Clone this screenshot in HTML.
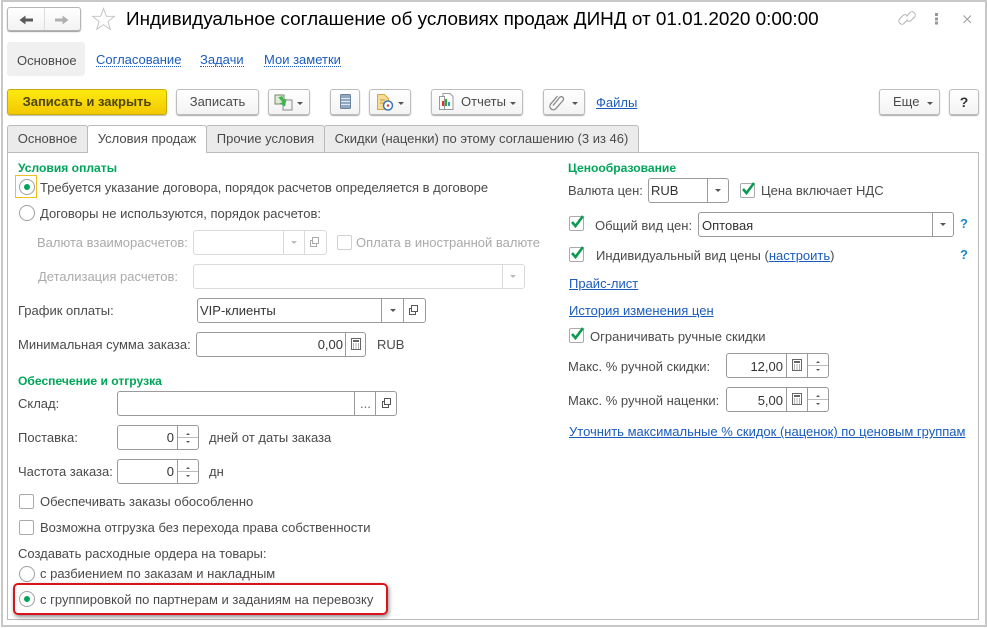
<!DOCTYPE html>
<html><head><meta charset="utf-8">
<style>
html,body{margin:0;padding:0;background:#fff}
#p{position:relative;width:987px;height:628px;overflow:hidden;background:#fff;font-family:"Liberation Sans",sans-serif;font-size:13px;color:#4a4a4a}
#p>*{position:absolute;box-sizing:border-box}
.t{white-space:nowrap;line-height:18px;height:16px}
.g{color:#aaa}
.h{font-weight:bold;color:#00a55a;font-size:12.100px;line-height:16px}
.l{color:#1a5cbe;text-decoration:underline}
.d{color:#1a5cbe;border-bottom:1px dotted #1a5cbe;line-height:16px;height:15px;white-space:nowrap}
.b{height:26px;border:1px solid #bdbdbd;border-radius:3px;background:linear-gradient(#fff,#f3f3f3);box-shadow:0 1px 1px #aaa;text-align:center;line-height:24px;white-space:nowrap}
.f{border:1px solid #9a9a9a;border-radius:3px;background:#fff}
.fd{border:1px solid #dadada;border-radius:3px;background:#fff}
.v{width:1px;background:#9a9a9a}
.vd{width:1px;background:#dadada}
.c{width:15px;height:15px;border:1px solid #aaa;border-radius:2px;background:#fff}
.r{width:16px;height:16px;border:1px solid #a0a0a0;border-radius:50%;background:#fff}
.dot{width:6px;height:6px;border-radius:50%;background:#00a55a}
.tab{height:27px;top:125px;border:1px solid #bbb;border-bottom:none;background:#ebebeb;border-radius:3px 3px 0 0;text-align:center;line-height:26px;white-space:nowrap}
.ar{width:0;height:0;border-left:3px solid transparent;border-right:3px solid transparent;border-top:3px solid #555}
svg{overflow:visible}
</style></head><body>
<div id="p">
<div style="left:1px;top:0;width:986px;height:627px;border:2px solid #c8c8c8"></div>

<!-- nav buttons -->
<div class="b" style="left:7px;top:7px;width:74px;height:24px;box-shadow:0 1px 1px #999;border-color:#b5b5b5"></div>
<div style="left:44px;top:8px;width:1px;height:22px;background:#ddd"></div>
<svg style="left:0;top:0" width="130" height="40"><path d="M19.500 20l6-4.500v3h7.500v3h-7.500v3z" fill="#5a5a5a"/><path d="M68.500 20l-6-4.500v3h-7.500v3h7.500v3z" fill="#b0b0b0"/><path d="M103.500 8.500L106.300 16.200 114.400 16.400 108 21.500 110.300 29.300 103.500 24.700 96.700 29.300 99 21.500 92.600 16.400 100.700 16.200z" fill="#fff" stroke="#c6c6c6"/></svg>

<div class="t" style="left:126px;top:8px;height:24px;line-height:24px;font-size:18.900px;color:#000">Индивидуальное соглашение об условиях продаж ДИНД от 01.01.2020 0:00:00</div>

<svg style="left:895px;top:8px" width="85" height="24"><g fill="none" stroke="#b4b4b4" stroke-width="1"><path d="M11.500 8.500l3.500-4a3.200 3.200 0 0 1 4.500 4.500l-3.500 3.500a3 3 0 0 1-4.200 0"/><path d="M12.500 11.500l-3.500 4a3.200 3.200 0 0 1-4.500-4.500l3.500-3.500a3 3 0 0 1 4.200 0"/></g><g fill="#999"><rect x="40" y="5" width="3" height="3"/><rect x="40" y="9.500" width="3" height="3"/><rect x="40" y="13.500" width="3" height="3"/></g><path d="M68.500 7.500l7.500 7.500m0-7.500l-7.500 7.500" stroke="#999" stroke-width=".9" fill="none"/></svg>

<!-- form nav -->
<div style="left:7px;top:42px;width:78px;height:34px;background:#f0f0f0;border-radius:3px"></div>
<div class="t" style="left:17px;top:52px">Основное</div>
<div class="d" style="left:96px;top:52px">Согласование</div>
<div class="d" style="left:200px;top:52px">Задачи</div>
<div class="d" style="left:264px;top:52px">Мои заметки</div>

<!-- command bar -->
<div class="b" style="left:7px;top:89px;width:160px;background:linear-gradient(#fdea10,#f2c800);border-color:#c7aa10;font-weight:bold;color:#4d4410;box-shadow:0 1px 1px #bba">Записать и закрыть</div>
<div class="b" style="left:176px;top:89px;width:83px">Записать</div>
<div class="b" style="left:268px;top:89px;width:42px"></div>
<svg style="left:274px;top:93px" width="20" height="18"><rect x="1" y="2" width="9" height="9" fill="#dfe9d8" stroke="#7a8a70"/><rect x="9" y="7" width="9" height="10" fill="#f4f4f4" stroke="#8a8a8a"/><path d="M6 3h4v4l3 0-4 7-4-5h3z" fill="#3fb54a" transform="rotate(-20 9 8)"/></svg>
<div class="ar" style="left:297px;top:102px"></div>
<div class="b" style="left:330px;top:89px;width:30px"></div>
<svg style="left:340px;top:94px" width="12" height="16"><rect x="0.500" y="0.500" width="10" height="14" rx="1" fill="#8fa9c3" stroke="#6d8299"/><path d="M1 4.500h9M1 7.500h9M1 10.500h9" stroke="#dfe7ef"/></svg>
<div class="b" style="left:369px;top:89px;width:42px"></div>
<svg style="left:377px;top:94px" width="18" height="18"><path d="M.5 .5h7l4 4v11h-11z" fill="#f6dc94" stroke="#d2a848"/><path d="M3 6h5M3 9h4" stroke="#c69a3a"/><circle cx="11" cy="11.500" r="4.500" fill="#fff" stroke="#3a78b8" stroke-width="1.500"/><circle cx="11" cy="11.500" r="1.300" fill="#d8404a"/></svg>
<div class="ar" style="left:398px;top:102px"></div>
<div class="b" style="left:431px;top:89px;width:92px;text-align:left;padding-left:29px">Отчеты</div>
<svg style="left:437px;top:92px" width="20" height="20"><path d="M6 1.500h7l3 3v13h-10z" fill="#fff" stroke="#999"/><path d="M2.500 4.500h5v13h-5z" fill="#fff" stroke="#999"/><rect x="5" y="9" width="2" height="5" fill="#d33"/><rect x="8" y="7" width="2" height="7" fill="#3a3"/><rect x="11" y="10" width="2" height="4" fill="#39c"/></svg>
<div class="ar" style="left:510px;top:102px"></div>
<div class="b" style="left:543px;top:89px;width:42px"></div>
<svg style="left:550px;top:93px" width="16" height="18"><path d="M4 12.500l6.500-8a2.300 2.300 0 0 1 3.500 3l-7.500 8.500a3.500 3.500 0 0 1-5-4.800l7-8.200" fill="none" stroke="#8a8a8a" stroke-width="1.300" transform="translate(-1 0)"/></svg>
<div class="ar" style="left:572px;top:102px"></div>
<div class="t l" style="left:596px;top:94px">Файлы</div>
<div class="b" style="left:879px;top:89px;width:61px;text-align:left;padding-left:13px">Еще</div>
<div class="ar" style="left:927px;top:102px"></div>
<div class="b" style="left:949px;top:89px;width:30px;font-weight:bold;font-size:14px;color:#333">?</div>

<!-- tabs + panel -->
<div style="left:7px;top:152px;width:972px;height:468px;border:1px solid #bbb"></div>
<div class="tab" style="left:7px;width:81px">Основное</div>
<div class="tab" style="left:87px;width:120px;height:28px;background:#fff;z-index:2">Условия продаж</div>
<div class="tab" style="left:206px;width:119px">Прочие условия</div>
<div class="tab" style="left:324px;width:315px">Скидки (наценки) по этому соглашению (3 из 46)</div>

<!-- left col -->
<div class="t h" style="left:18px;top:160px">Условия оплаты</div>
<div style="left:15px;top:175px;width:22px;height:23px;border:1px solid #f0c020"></div>
<div class="r" style="left:19px;top:179px"></div><div class="dot" style="left:24px;top:184px"></div>
<div class="t" style="left:40px;top:179px">Требуется указание договора, порядок расчетов определяется в договоре</div>
<div class="r" style="left:19px;top:205px"></div>
<div class="t" style="left:40px;top:205px">Договоры не используются, порядок расчетов:</div>

<div class="t g" style="left:37px;top:234px">Валюта взаиморасчетов:</div>
<div class="fd" style="left:193px;top:230px;width:134px;height:25px"></div>
<div class="vd" style="left:283px;top:231px;height:23px"></div><div class="vd" style="left:304px;top:231px;height:23px"></div>
<div class="ar" style="left:291px;top:241px;border-top-color:#bbb"></div>
<svg style="left:309px;top:236px" width="12" height="12"><path d="M3.500 1.500h6v6h-6zM3.500 4.500h-2v6h6v-3" fill="none" stroke="#aaa"/></svg>
<div class="c" style="left:337px;top:235px;border-color:#d0d0d0"></div>
<div class="t g" style="left:356px;top:234px">Оплата в иностранной валюте</div>

<div class="t g" style="left:38px;top:268px">Детализация расчетов:</div>
<div class="fd" style="left:193px;top:264px;width:332px;height:25px"></div>
<div class="vd" style="left:502px;top:265px;height:23px"></div>
<div class="ar" style="left:510px;top:275px;border-top-color:#bbb"></div>

<div class="t" style="left:18px;top:302px">График оплаты:</div>
<div class="f" style="left:197px;top:298px;width:229px;height:25px"></div>
<div class="v" style="left:381px;top:299px;height:23px"></div><div class="v" style="left:403px;top:299px;height:23px"></div>
<div class="ar" style="left:390px;top:309px"></div>
<svg style="left:408px;top:304px" width="12" height="12"><path d="M3.500 1.500h6v6h-6zM3.500 4.500h-2v6h6v-3" fill="none" stroke="#555"/></svg>
<div class="t" style="left:200px;top:302px;color:#333">VIP-клиенты</div>

<div class="t" style="left:18px;top:336px">Минимальная сумма заказа:</div>
<div class="f" style="left:196px;top:332px;width:170px;height:25px"></div>
<div class="v" style="left:345px;top:333px;height:23px"></div>
<div class="t" style="left:296px;top:336px;width:47px;text-align:right;color:#333">0,00</div>
<svg class="calc" style="left:350px;top:338px" width="12" height="13"><rect x="1.500" y="0.500" width="9" height="11" fill="none" stroke="#666"/><rect x="3" y="2" width="6" height="2" fill="#666"/><path d="M3 6h1M5.500 6h1M8 6h1M3 8h1M5.500 8h1M8 8h1M3 10h1M5.500 10h1M8 10h1" stroke="#666"/></svg>
<div class="t" style="left:377px;top:336px">RUB</div>

<div class="t h" style="left:18px;top:373px">Обеспечение и отгрузка</div>
<div class="t" style="left:18px;top:395px">Склад:</div>
<div class="f" style="left:117px;top:391px;width:280px;height:25px"></div>
<div class="v" style="left:354px;top:392px;height:23px"></div><div class="v" style="left:375px;top:392px;height:23px"></div>
<div class="t" style="left:360px;top:395px;color:#666">...</div>
<svg style="left:381px;top:397px" width="12" height="12"><path d="M3.500 1.500h6v6h-6zM3.500 4.500h-2v6h6v-3" fill="none" stroke="#555"/></svg>

<div class="t" style="left:18px;top:429px">Поставка:</div>
<div class="f" style="left:117px;top:425px;width:82px;height:25px"></div>
<div class="v" style="left:177px;top:426px;height:23px"></div>
<div style="left:178px;top:437px;width:20px;height:1px;background:#bbb"></div>
<div class="t" style="left:130px;top:429px;width:44px;text-align:right;color:#333">0</div>
<svg style="left:184px;top:430px" width="8" height="16"><path d="M2 5l2-2 2 2zM2 11l2 2 2-2z" fill="#555"/></svg>
<div class="t" style="left:209px;top:429px">дней от даты заказа</div>

<div class="t" style="left:18px;top:463px">Частота заказа:</div>
<div class="f" style="left:117px;top:459px;width:82px;height:25px"></div>
<div class="v" style="left:177px;top:460px;height:23px"></div>
<div style="left:178px;top:471px;width:20px;height:1px;background:#bbb"></div>
<div class="t" style="left:130px;top:463px;width:44px;text-align:right;color:#333">0</div>
<svg style="left:184px;top:464px" width="8" height="16"><path d="M2 5l2-2 2 2zM2 11l2 2 2-2z" fill="#555"/></svg>
<div class="t" style="left:209px;top:463px">дн</div>

<div class="c" style="left:19px;top:494px"></div>
<div class="t" style="left:40px;top:493px">Обеспечивать заказы обособленно</div>
<div class="c" style="left:19px;top:520px"></div>
<div class="t" style="left:40px;top:519px">Возможна отгрузка без перехода права собственности</div>
<div class="t" style="left:18px;top:545px">Создавать расходные ордера на товары:</div>
<div class="r" style="left:19px;top:566px"></div>
<div class="t" style="left:40px;top:565px">с разбиением по заказам и накладным</div>
<div style="left:13px;top:583px;width:375px;height:32px;border:2px solid #d8141c;border-radius:5px;box-shadow:1px 2px 4px rgba(0,0,0,.45)"></div>
<div class="r" style="left:19px;top:591px"></div><div class="dot" style="left:24px;top:596px"></div>
<div class="t" style="left:40px;top:591px">с группировкой по партнерам и заданиям на перевозку</div>

<!-- right col -->
<div class="t h" style="left:568px;top:160px">Ценообразование</div>
<div class="t" style="left:568px;top:182px">Валюта цен:</div>
<div class="f" style="left:648px;top:178px;width:81px;height:25px"></div>
<div class="v" style="left:707px;top:179px;height:23px"></div>
<div class="ar" style="left:715px;top:189px"></div>
<div class="t" style="left:651px;top:182px;color:#333">RUB</div>
<div class="c" style="left:740px;top:183px"></div>
<svg style="left:740px;top:180px" width="18" height="16"><path d="M3 9l3.500 4L14 3" fill="none" stroke="#0a9a50" stroke-width="2.600"/></svg>
<div class="t" style="left:761px;top:182px">Цена включает НДС</div>

<div class="c" style="left:569px;top:216px"></div>
<svg style="left:569px;top:213px" width="18" height="16"><path d="M3 9l3.500 4L14 3" fill="none" stroke="#0a9a50" stroke-width="2.600"/></svg>
<div class="t" style="left:595px;top:217px">Общий вид цен:</div>
<div class="f" style="left:698px;top:212px;width:256px;height:25px"></div>
<div class="v" style="left:932px;top:213px;height:23px"></div>
<div class="ar" style="left:940px;top:223px"></div>
<div class="t" style="left:702px;top:217px;color:#333">Оптовая</div>
<div class="t" style="left:960px;top:215px;font-weight:bold;color:#1f88c8">?</div>

<div class="c" style="left:569px;top:247px"></div>
<svg style="left:569px;top:244px" width="18" height="16"><path d="M3 9l3.500 4L14 3" fill="none" stroke="#0a9a50" stroke-width="2.600"/></svg>
<div class="t" style="left:596px;top:247px">Индивидуальный вид цены (<span class="l">настроить</span>)</div>
<div class="t" style="left:960px;top:246px;font-weight:bold;color:#1f88c8">?</div>

<div class="t l" style="left:569px;top:275px">Прайс-лист</div>
<div class="t l" style="left:569px;top:302px">История изменения цен</div>
<div class="c" style="left:569px;top:328px"></div>
<svg style="left:569px;top:325px" width="18" height="16"><path d="M3 9l3.500 4L14 3" fill="none" stroke="#0a9a50" stroke-width="2.600"/></svg>
<div class="t" style="left:590px;top:328px">Ограничивать ручные скидки</div>

<div class="t" style="left:568px;top:358px">Макс. % ручной скидки:</div>
<div class="f" style="left:726px;top:353px;width:103px;height:25px"></div>
<div class="v" style="left:786px;top:354px;height:23px"></div><div class="v" style="left:807px;top:354px;height:23px"></div>
<div style="left:808px;top:365px;width:20px;height:1px;background:#bbb"></div>
<div class="t" style="left:730px;top:358px;width:53px;text-align:right;color:#333">12,00</div>
<svg style="left:791px;top:359px" width="12" height="13"><rect x="1.500" y="0.500" width="9" height="11" fill="none" stroke="#666"/><rect x="3" y="2" width="6" height="2" fill="#666"/><path d="M3 6h1M5.500 6h1M8 6h1M3 8h1M5.500 8h1M8 8h1M3 10h1M5.500 10h1M8 10h1" stroke="#666"/></svg>
<svg style="left:814px;top:358px" width="8" height="16"><path d="M2 5l2-2 2 2zM2 11l2 2 2-2z" fill="#555"/></svg>

<div class="t" style="left:568px;top:392px">Макс. % ручной наценки:</div>
<div class="f" style="left:726px;top:387px;width:103px;height:25px"></div>
<div class="v" style="left:786px;top:388px;height:23px"></div><div class="v" style="left:807px;top:388px;height:23px"></div>
<div style="left:808px;top:399px;width:20px;height:1px;background:#bbb"></div>
<div class="t" style="left:730px;top:392px;width:53px;text-align:right;color:#333">5,00</div>
<svg style="left:791px;top:393px" width="12" height="13"><rect x="1.500" y="0.500" width="9" height="11" fill="none" stroke="#666"/><rect x="3" y="2" width="6" height="2" fill="#666"/><path d="M3 6h1M5.500 6h1M8 6h1M3 8h1M5.500 8h1M8 8h1M3 10h1M5.500 10h1M8 10h1" stroke="#666"/></svg>
<svg style="left:814px;top:392px" width="8" height="16"><path d="M2 5l2-2 2 2zM2 11l2 2 2-2z" fill="#555"/></svg>

<div class="t l" style="left:569px;top:423px">Уточнить максимальные % скидок (наценок) по ценовым группам</div>
</div>
</body></html>
